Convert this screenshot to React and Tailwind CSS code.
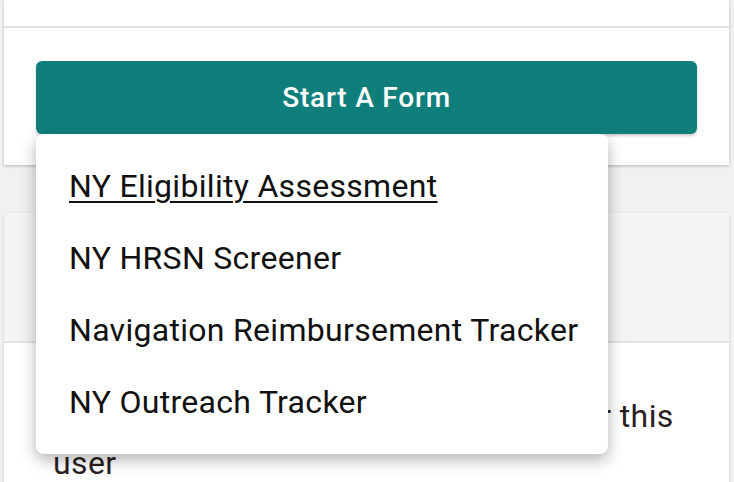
export default function App() {
  const items = [
    "NY Eligibility Assessment",
    "NY HRSN Screener",
    "Navigation Reimbursement Tracker",
    "NY Outreach Tracker",
  ];
  return (
    <div
      className="relative flex flex-col w-[734px] h-[482px] overflow-hidden bg-[#f1f1f1]"
      style={{ fontFamily: "Roboto, 'Noto Sans', sans-serif" }}
    >
      <div className="ml-[4px] w-[725px] bg-white shadow-[0_1px_3px_rgba(0,0,0,0.25)]">
        <div className="h-[28px] border-b-2 border-[#e2e2e2]" />
        <div className="px-[32px] pt-[33px] pb-[31px]">
          <button className="w-full h-[73px] rounded-[6px] bg-[#107f7b] text-white text-[28px] font-medium tracking-[0.8px] shadow-[0_2px_3px_rgba(0,0,0,0.2)]">
            Start A Form
          </button>
        </div>
      </div>
      <div className="mt-[48px] ml-[4px] w-[725px] flex-1 bg-white shadow-[0_1px_3px_rgba(0,0,0,0.15)]">
        <div className="h-[130px] bg-[#f4f4f4] border-b-2 border-[#e2e2e2]" />
        <div className="pl-[49px] pr-[40px] pt-[50px] text-[32px] tracking-[0.4px] leading-[47px] text-[#2a1f1f]">
          No forms have been completed yet for this user
        </div>
      </div>
      <div className="absolute left-[36px] top-[134px] w-[572px] rounded-[8px] bg-white py-[16px] shadow-[0_6px_16px_rgba(0,0,0,0.3)]">
        {items.map((t, i) => (
          <div
            key={t}
            className={
              "h-[72px] flex items-center pl-[33px] text-[32px] tracking-[0.3px] text-[#111] " +
              (i === 0 ? "underline decoration-2 underline-offset-[4px]" : "")
            }
          >
            {t}
          </div>
        ))}
      </div>
    </div>
  );
}
